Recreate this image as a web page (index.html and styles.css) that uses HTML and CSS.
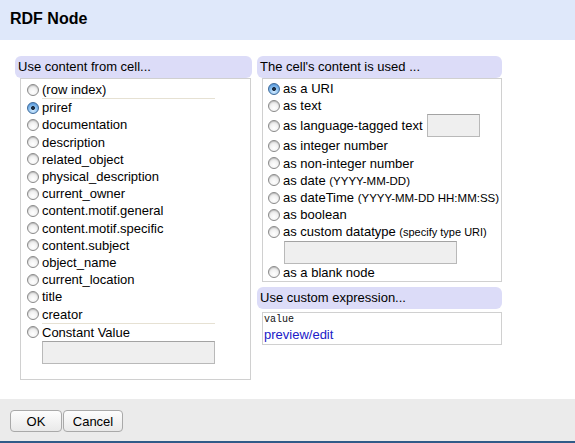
FILE: index.html
```html
<!DOCTYPE html>
<html>
<head>
<meta charset="utf-8">
<title>RDF Node</title>
<link rel="stylesheet" href="styles.css">
</head>
<body>
<div class="dialog">
  <div class="dialog-header">RDF Node</div>
  <div class="dialog-body">
    <div class="col col-left">
      <div class="sec-head">Use content from cell...</div>
      <div class="box box-left">
        <label class="row"><input type="radio" name="col"><span>(row index)</span></label>
        <div class="sep"></div>
        <label class="row"><input type="radio" name="col" checked><span>priref</span></label>
        <label class="row"><input type="radio" name="col"><span>documentation</span></label>
        <label class="row"><input type="radio" name="col"><span>description</span></label>
        <label class="row"><input type="radio" name="col"><span>related_object</span></label>
        <label class="row"><input type="radio" name="col"><span>physical_description</span></label>
        <label class="row"><input type="radio" name="col"><span>current_owner</span></label>
        <label class="row"><input type="radio" name="col"><span>content.motif.general</span></label>
        <label class="row"><input type="radio" name="col"><span>content.motif.specific</span></label>
        <label class="row"><input type="radio" name="col"><span>content.subject</span></label>
        <label class="row"><input type="radio" name="col"><span>object_name</span></label>
        <label class="row"><input type="radio" name="col"><span>current_location</span></label>
        <label class="row"><input type="radio" name="col"><span>title</span></label>
        <label class="row"><input type="radio" name="col"><span>creator</span></label>
        <div class="sep"></div>
        <label class="row"><input type="radio" name="col"><span>Constant Value</span></label>
        <input type="text" class="field field-const">
      </div>
    </div>
    <div class="col col-right">
      <div class="sec-head">The cell's content is used ...</div>
      <div class="box box-right">
        <label class="row"><input type="radio" name="type" checked><span>as a URI</span></label>
        <label class="row"><input type="radio" name="type"><span>as text</span></label>
        <label class="row row-lang"><input type="radio" name="type"><span>as language-tagged text</span><input type="text" class="field field-lang"></label>
        <label class="row"><input type="radio" name="type"><span>as integer number</span></label>
        <label class="row"><input type="radio" name="type"><span>as non-integer number</span></label>
        <label class="row"><input type="radio" name="type"><span>as date <small>(YYYY-MM-DD)</small></span></label>
        <label class="row"><input type="radio" name="type"><span>as dateTime <small>(YYYY-MM-DD HH:MM:SS)</small></span></label>
        <label class="row"><input type="radio" name="type"><span>as boolean</span></label>
        <label class="row"><input type="radio" name="type"><span>as custom datatype <small class="tiny">(specify type URI)</small></span></label>
        <input type="text" class="field field-custom">
        <label class="row"><input type="radio" name="type"><span>as a blank node</span></label>
      </div>
      <div class="sec-head sec-expr">Use custom expression...</div>
      <div class="box box-expr">
        <div class="expr-code">value</div>
        <a href="#" class="expr-link">preview/edit</a>
      </div>
    </div>
  </div>
  <div class="dialog-footer">
    <button class="btn btn-ok">OK</button><button class="btn btn-cancel">Cancel</button>
  </div>
</div>
</body>
</html>
```
FILE: styles.css
```css
html, body {
  margin: 0;
  padding: 0;
  background: #ffffff;
}

body {
  font-family: "Liberation Sans", Arial, sans-serif;
  font-size: 13px;
  color: #000;
}

.dialog {
  width: 575px;
  height: 443px;
  display: flex;
  flex-direction: column;
}

.dialog-header {
  height: 40px;
  line-height: 38px;
  padding-left: 10px;
  background: #dfe8fa;
  font-weight: bold;
  font-size: 16px;
  box-sizing: border-box;
}

.dialog-body {
  height: 359px;
  box-sizing: border-box;
  padding: 16px 0 0 15px;
  display: flex;
  gap: 5px;
  align-items: flex-start;
}

.col {
  display: flex;
  flex-direction: column;
}

.col-left {
  width: 237px;
}

.col-right {
  width: 245px;
}

.sec-head {
  height: 22px;
  line-height: 22px;
  padding-left: 3px;
  background: #dcdcf8;
  border-radius: 6px;
  white-space: nowrap;
}

.box {
  border: 1px solid #d0d0d0;
  margin-left: 5px;
  box-sizing: border-box;
}

.box-left {
  height: 302px;
  padding: 2px 0 0 6px;
  margin-right: 1px;
}

.box-right {
  padding: 1px 0 0 5px;
  margin-bottom: 5px;
}

.row {
  display: flex;
  align-items: center;
  height: 17.2px;
  white-space: nowrap;
}

.row-lang {
  height: 23px;
}

.row small {
  font-size: 11.5px;
}

.row small.tiny {
  font-size: 11px;
}

input[type="radio"] {
  -webkit-appearance: none;
  appearance: none;
  width: 12px;
  height: 12px;
  margin: 0 3px 0 0;
  border-radius: 50%;
  border: 1px solid #8a8a8a;
  box-sizing: border-box;
  background: radial-gradient(circle at 50% 70%, #ffffff 0%, #f2f2f2 45%, #cfcfcf 100%);
  box-shadow: inset 0 1px 1px rgba(0,0,0,0.15);
  flex: none;
}

input[type="radio"]:checked {
  border-color: #3e6a9a;
  background:
    radial-gradient(circle at 50% 50%, #1d2f45 0, #1d2f45 1.6px, transparent 2.3px),
    radial-gradient(circle at 50% 75%, #d6ecff 0%, #8ec2f0 45%, #3c82cf 100%);
  box-shadow: none;
}

.sep {
  height: 1px;
  width: 173px;
  margin-left: 15px;
  background: #e6e1d3;
}

.field {
  display: block;
  box-sizing: border-box;
  height: 23px;
  margin: 0;
  padding: 0;
  background: #efefef;
  border: 1px solid #b9b9b9;
  border-top-color: #a3a3a3;
}

.field-const {
  width: 173px;
  margin-left: 15px;
}

.field-lang {
  width: 53px;
  margin-left: 4px;
}

.field-custom {
  width: 173px;
  margin-left: 16px;
}

.sec-expr {
  margin-top: 0;
}

.box-expr {
  margin-top: 3px;
  height: 33px;
  padding: 0 0 0 1px;
}

.expr-code {
  font-family: "Liberation Mono", "Courier New", monospace;
  font-size: 10px;
  line-height: 11px;
  height: 13px;
  padding-top: 1px;
  color: #111;
}

.expr-link {
  display: block;
  line-height: 16px;
  color: #2020c8;
  text-decoration: none;
}

.dialog-footer {
  height: 44px;
  box-sizing: border-box;
  background: #ebebeb;
  border-bottom: 2px solid #305b88;
  padding: 11px 0 0 10px;
  display: flex;
  align-items: flex-start;
}

.btn {
  font-family: "Liberation Sans", Arial, sans-serif;
  font-size: 13px;
  height: 22px;
  margin: 0 1px 0 0;
  padding: 0;
  border: 1px solid #a9a9a9;
  border-radius: 4px;
  background: linear-gradient(#fdfdfd, #e9e9e9);
  color: #000;
}

.btn-ok {
  width: 52px;
}

.btn-cancel {
  width: 60px;
}
```
